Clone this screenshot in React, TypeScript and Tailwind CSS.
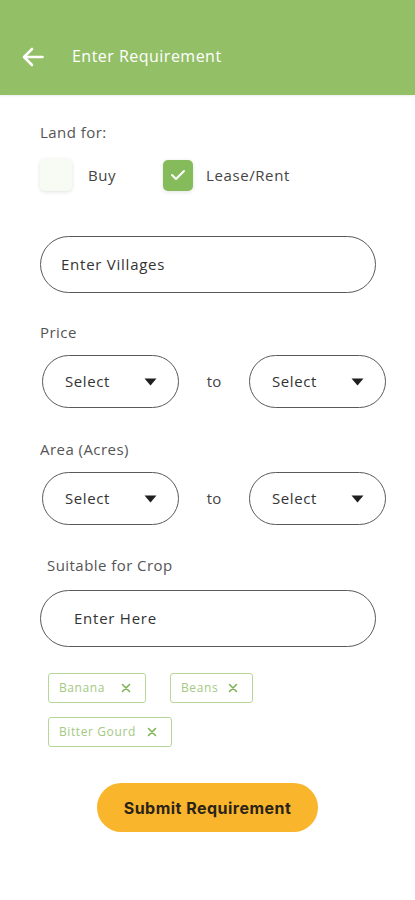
import React from 'react';

const CROPS = [
  [
    { name: 'Banana', w: 'w-[98px]' },
    { name: 'Beans', w: 'w-[83px]' },
  ],
  [{ name: 'Bitter Gourd', w: 'w-[124px]' }],
];

const Caret = () => (
  <svg width="13" height="8" viewBox="0 0 13 8" fill="#1f1f1f">
    <path d="M0.5 0.5h12L6.5 7.5z" />
  </svg>
);

const SelectBox = () => (
  <div className="flex items-center justify-between w-[137px] h-[53px] rounded-full border border-[#5a5a5a] pl-[22px] pr-[21px]">
    <span className="text-[15px] text-[#333] tracking-[0.04em]">Select</span>
    <Caret />
  </div>
);

const RangeRow = () => (
  <div className="flex items-center pl-[42px]">
    <SelectBox />
    <span className="w-[70px] text-center text-[15px] text-[#444]">to</span>
    <SelectBox />
  </div>
);

export default function App() {
  return (
    <div
      className="w-[415px] h-[900px] bg-white flex flex-col"
      style={{ fontFamily: '"Open Sans", "Noto Sans", sans-serif' }}
    >
      {/* header */}
      <div className="h-[95px] bg-[#93bf67] flex items-end pb-[28px] pl-[22px] shadow-[0_1px_2px_rgba(0,0,0,0.08)]">
        <svg width="22" height="20" viewBox="0 0 22 20" fill="none" stroke="white" strokeWidth="2.6" strokeLinecap="round" strokeLinejoin="round">
          <path d="M20.5 10H2.5M10 2L2 10l8 8" />
        </svg>
        <span className="ml-[28px] text-[16px] text-white leading-[22px] tracking-[0.03em]">Enter Requirement</span>
      </div>

      <div className="mt-[27px] pl-[40px] text-[15px] leading-[20px] text-[#555] tracking-[0.03em]">Land for:</div>

      <div className="mt-[17px] pl-[40px] flex items-center">
        <div className="w-[32px] h-[32px] rounded-[5px] bg-[#f7fbf4] shadow-[0_1px_4px_rgba(0,0,0,0.12)]" />
        <span className="ml-[16px] w-[75px] text-[15px] text-[#444] tracking-[0.04em]">Buy</span>
        <div className="w-[30px] h-[31px] rounded-[5px] bg-[#86bb5c] flex items-center justify-center shadow-[0_1px_4px_rgba(0,0,0,0.12)]">
          <svg width="16" height="12" viewBox="0 0 16 12" fill="none" stroke="white" strokeWidth="2" strokeLinecap="round" strokeLinejoin="round">
            <path d="M2 6l4 4 8-8" />
          </svg>
        </div>
        <span className="ml-[13px] text-[15px] text-[#444] tracking-[0.04em]">Lease/Rent</span>
      </div>

      <div className="mt-[45px] ml-[40px] w-[336px] h-[57px] rounded-full border border-[#5a5a5a] flex items-center pl-[20px] text-[15px] text-[#333] tracking-[0.05em]">
        Enter Villages
      </div>

      <div className="mt-[29px] pl-[40px] text-[15px] leading-[20px] text-[#555] tracking-[0.03em]">Price</div>
      <div className="mt-[13px]">
        <RangeRow />
      </div>

      <div className="mt-[31px] pl-[40px] text-[15px] leading-[20px] text-[#555] tracking-[0.03em]">Area (Acres)</div>
      <div className="mt-[13px]">
        <RangeRow />
      </div>

      <div className="mt-[30px] pl-[47px] text-[15px] leading-[20px] text-[#555] tracking-[0.03em]">Suitable for Crop</div>

      <div className="mt-[15px] ml-[40px] w-[336px] h-[57px] rounded-full border border-[#5a5a5a] flex items-center pl-[33px] text-[15px] text-[#333] tracking-[0.05em]">
        Enter Here
      </div>

      <div className="mt-[26px] pl-[48px] flex flex-col gap-[14px]">
        {CROPS.map((row, i) => (
          <div key={i} className="flex gap-[24px]">
            {row.map((c) => (
              <div
                key={c.name}
                className={`${c.w} h-[30px] flex items-center justify-between pl-[10px] pr-[14px] rounded-[3px] border border-[#b5d89a] text-[12px] text-[#a3c982] tracking-[0.05em]`}
              >
                {c.name}
                <svg width="10" height="10" viewBox="0 0 10 10" fill="none" stroke="#7fb456" strokeWidth="1.6" strokeLinecap="round">
                  <path d="M1.5 1.5l7 7M8.5 1.5l-7 7" />
                </svg>
              </div>
            ))}
          </div>
        ))}
      </div>

      <div className="mt-[36px] flex justify-center">
        <div
          className="w-[221px] h-[49px] rounded-full bg-[#f9b52b] flex items-center justify-center text-[16px] font-bold text-[#2a2418] tracking-[0.03em]"
          style={{ fontFamily: 'Inter, "Liberation Sans", sans-serif' }}
        >
          Submit Requirement
        </div>
      </div>
    </div>
  );
}
